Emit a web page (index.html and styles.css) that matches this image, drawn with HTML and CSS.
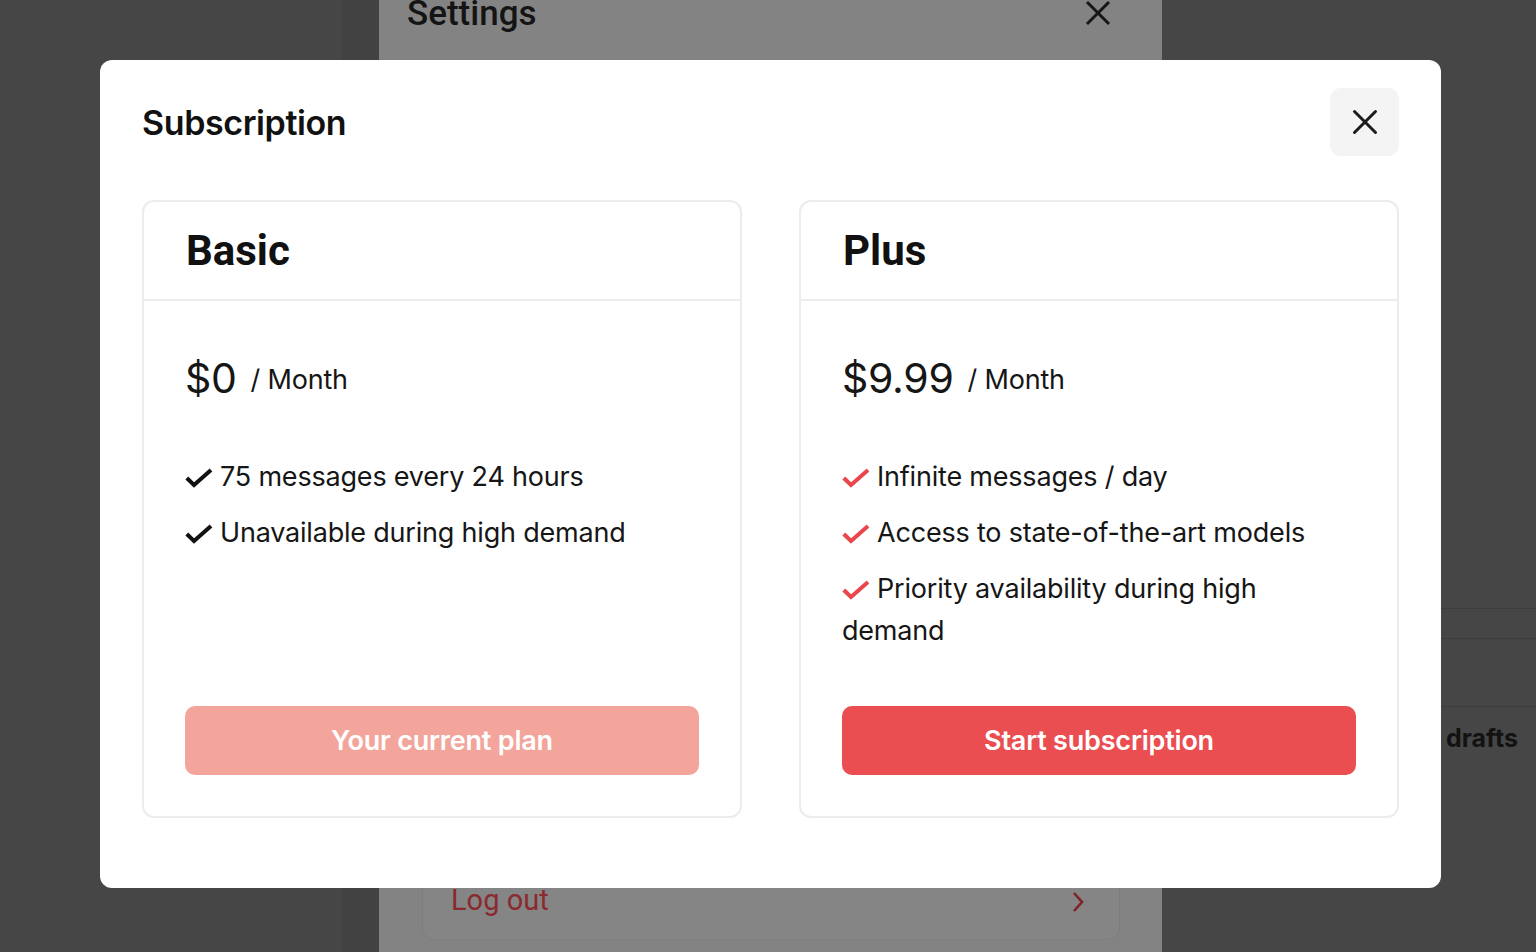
FILE: index.html
```html
<!DOCTYPE html>
<html lang="en">
<head>
<meta charset="utf-8">
<title>Subscription</title>
<link rel="stylesheet" href="styles.css">
</head>
<body>
<div class="backdrop">
  <div class="side-strip"></div>
  <section class="settings">
    <div class="settings-head">
      <h2 class="settings-title">Settings</h2>
      <svg class="settings-x" width="26" height="26" viewBox="0 0 26 26"><path d="M2 2 L24 24 M24 2 L2 24" stroke="#161616" stroke-width="3" fill="none"/></svg>
    </div>
    <div class="settings-spacer"></div>
    <div class="logout-card">
      <span class="logout-text">Log out</span>
      <svg class="chev" width="14" height="22" viewBox="0 0 14 22"><path d="M3 2 L11 11 L3 20" stroke="#7e2328" stroke-width="2.6" fill="none"/></svg>
    </div>
  </section>
  <aside class="right-pane">
    <div class="rp-space"></div>
    <div class="rp-row rp-a"></div>
    <div class="rp-row rp-b"></div>
    <div class="rp-row rp-c"><span class="drafts">drafts</span></div>
  </aside>
</div>

<div class="modal" role="dialog">
  <header class="modal-head">
    <h1 class="modal-title">Subscription</h1>
    <button class="close-btn" aria-label="Close">
      <svg width="26" height="26" viewBox="0 0 26 26"><path d="M2.5 2.5 L23.5 23.5 M23.5 2.5 L2.5 23.5" stroke="#1b1b1b" stroke-width="3" stroke-linecap="round" fill="none"/></svg>
    </button>
  </header>
  <div class="plans">
    <article class="plan">
      <div class="plan-head"><h3 class="plan-name">Basic</h3></div>
      <div class="plan-body">
        <div class="price"><span class="amount">$0</span><span class="per">/ Month</span></div>
        <ul class="features">
          <li><svg class="check" width="28" height="22" viewBox="0 0 28 22"><path d="M1.8 11 L9 18 L26 3" stroke="#111" stroke-width="4" fill="none"/></svg>75 messages every 24 hours</li>
          <li><svg class="check" width="28" height="22" viewBox="0 0 28 22"><path d="M1.8 11 L9 18 L26 3" stroke="#111" stroke-width="4" fill="none"/></svg>Unavailable during high demand</li>
        </ul>
        <button class="plan-btn current">Your current plan</button>
      </div>
    </article>
    <article class="plan">
      <div class="plan-head"><h3 class="plan-name">Plus</h3></div>
      <div class="plan-body">
        <div class="price"><span class="amount">$9.99</span><span class="per">/ Month</span></div>
        <ul class="features">
          <li><svg class="check" width="28" height="22" viewBox="0 0 28 22"><path d="M1.8 11 L9 18 L26 3" stroke="#e9474c" stroke-width="4" fill="none"/></svg>Infinite messages / day</li>
          <li><svg class="check" width="28" height="22" viewBox="0 0 28 22"><path d="M1.8 11 L9 18 L26 3" stroke="#e9474c" stroke-width="4" fill="none"/></svg>Access to state-of-the-art models</li>
          <li><svg class="check" width="28" height="22" viewBox="0 0 28 22"><path d="M1.8 11 L9 18 L26 3" stroke="#e9474c" stroke-width="4" fill="none"/></svg>Priority availability during high demand</li>
        </ul>
        <button class="plan-btn start">Start subscription</button>
      </div>
    </article>
  </div>
</div>
</body>
</html>
```
FILE: styles.css
```css
* { box-sizing: border-box; }
html, body { margin: 0; padding: 0; }
body {
  width: 1536px;
  height: 952px;
  overflow: hidden;
  background: #464646;
  font-family: Inter, "Noto Sans", sans-serif;
  color: #161616;
  position: relative;
}

.backdrop {
  display: flex;
  height: 952px;
}
.side-strip {
  width: 37px;
  margin-left: 342px;
  background: #424242;
}
.settings {
  width: 783px;
  height: 952px;
  background: #838384;
  display: flex;
  flex-direction: column;
  padding: 0 42px 12px 28px;
}
.settings-head {
  display: flex;
  align-items: center;
  justify-content: space-between;
  margin-top: -6px;
  padding-right: 9px;
}
.settings-title {
  margin: 0;
  font-family: Roboto, sans-serif;
  font-size: 35px;
  font-weight: 500;
  color: #141414;
  line-height: 40px;
}
.settings-x { margin-top: -2px; }
.settings-spacer { flex: 1; }
.logout-card {
  height: 82px;
  background: #858585;
  border: 1px solid #7e7e7e;
  border-radius: 12px;
  display: flex;
  align-items: flex-start;
  justify-content: space-between;
  padding: 24px 34px 0 28px;
  margin-left: 15px;
}
.logout-text {
  font-family: Roboto, sans-serif;
  font-size: 29px;
  line-height: 34px;
  color: #8a2a2f;
}
.chev { margin-top: 8px; }

.right-pane {
  flex: 1;
  display: flex;
  flex-direction: column;
}
.rp-space { height: 608px; }
.rp-row { border-top: 1px solid #3d3d3d; }
.rp-a { height: 30px; }
.rp-b { height: 68px; }
.rp-c {
  padding: 16px 0 0 284px;
}
.drafts {
  font-family: Inter, sans-serif;
  font-weight: 700;
  font-size: 25px;
  color: #121212;
}

/* Modal */
.modal {
  position: absolute;
  left: 100px;
  top: 60px;
  width: 1341px;
  height: 828px;
  background: #fff;
  border-radius: 12px;
  padding: 28px 42px 0 42px;
}
.modal-head {
  display: flex;
  align-items: center;
  justify-content: space-between;
  height: 68px;
}
.modal-title {
  margin: 0;
  font-size: 34px;
  font-weight: 600;
  color: #111;
  letter-spacing: -0.4px;
}
.close-btn {
  width: 69px;
  height: 68px;
  border: none;
  border-radius: 11px;
  background: #f4f4f4;
  display: flex;
  align-items: center;
  justify-content: center;
  padding: 0;
}

.plans {
  display: grid;
  grid-template-columns: 600px 600px;
  column-gap: 57px;
  margin-top: 44px;
}
.plan {
  height: 618px;
  border: 2px solid #ececec;
  border-radius: 12px;
  display: flex;
  flex-direction: column;
}
.plan-head {
  height: 99px;
  border-bottom: 2px solid #ececec;
  display: flex;
  align-items: center;
  padding-left: 42px;
}
.plan-name {
  margin: 0;
  font-family: Roboto, sans-serif;
  font-weight: 700;
  font-size: 42px;
  color: #111;
}
.plan-body {
  flex: 1;
  display: flex;
  flex-direction: column;
  padding: 52px 41px 41px 41px;
}
.price {
  display: flex;
  align-items: center;
  height: 51px;
  color: #161616;
}
.amount {
  font-size: 41px;
  font-weight: 400;
  line-height: 51px;
  letter-spacing: -0.3px;
}
.per {
  font-size: 27px;
  margin-left: 14px;
  letter-spacing: -0.2px;
  margin-top: 2px;
}
.features {
  list-style: none;
  margin: 52px 0 0 0;
  padding: 0;
  font-size: 27px;
  letter-spacing: -0.2px;
  line-height: 42px;
  color: #161616;
}
.features li + li { margin-top: 14px; }
.check {
  display: inline-block;
  vertical-align: -3px;
  margin-right: 7px;
}
.plan-btn {
  margin-top: auto;
  height: 69px;
  width: 100%;
  border: none;
  border-radius: 10px;
  color: #fff;
  font-family: Inter, sans-serif;
  font-size: 27px;
  font-weight: 600;
  letter-spacing: -0.2px;
}
.plan-btn.current { background: #f3a59c; }
.plan-btn.start { background: #eb4e51; }
```
